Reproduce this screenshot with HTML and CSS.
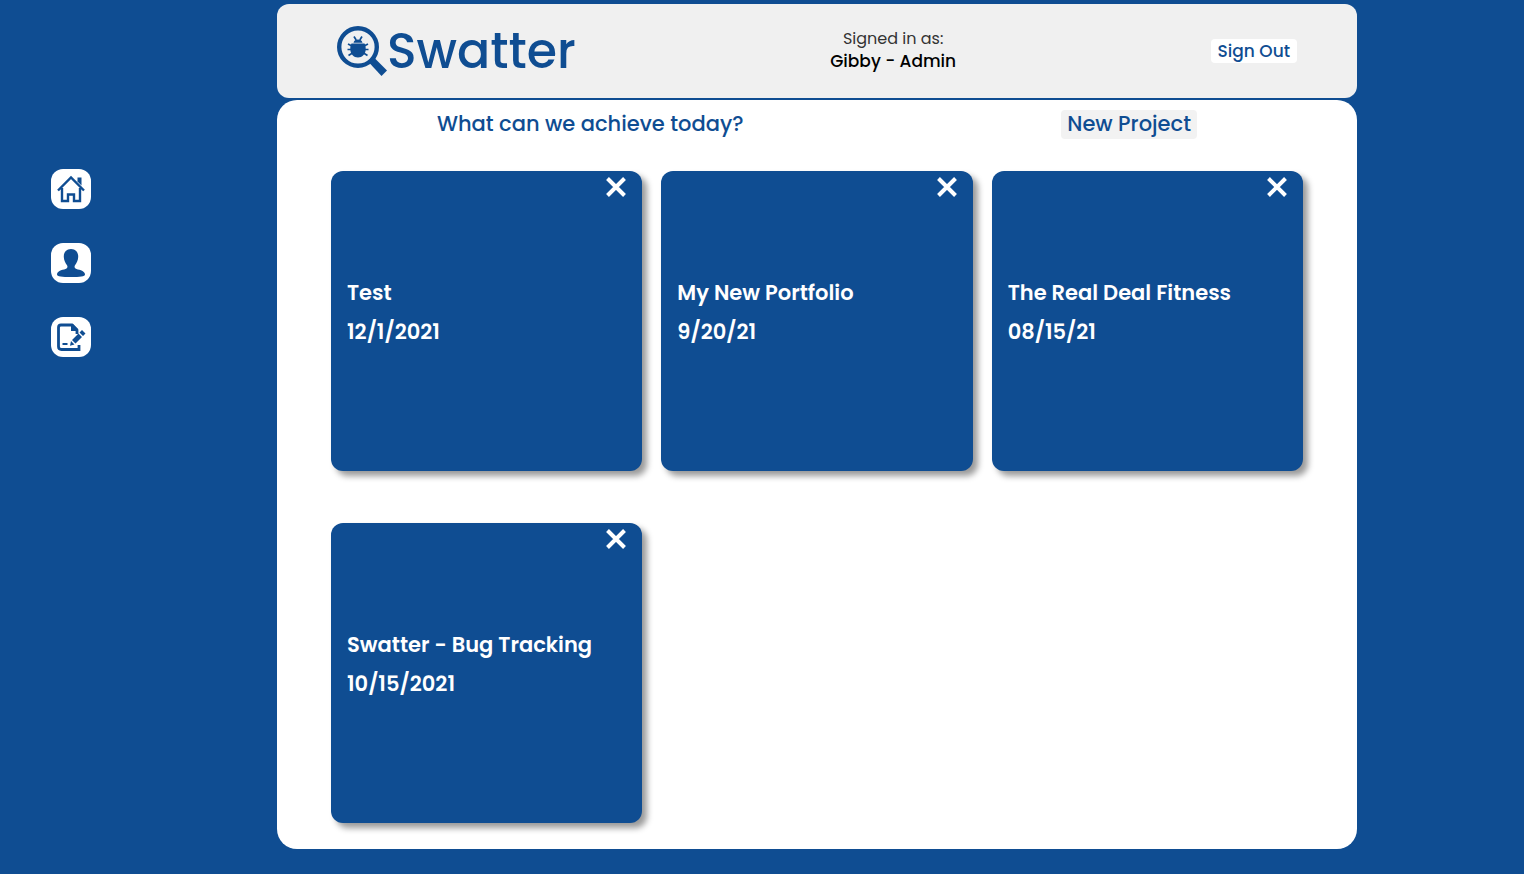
FILE: index.html
```html
<!DOCTYPE html>
<html lang="en">
<head>
<meta charset="utf-8">
<meta name="viewport" content="width=device-width, initial-scale=1">
<title>Swatter</title>
<link rel="stylesheet" href="styles.css">
</head>
<body>
<div class="app">
  <nav class="sidebar" aria-label="Main">
    <a class="nav-link" href="#home" aria-label="Home">
      <svg viewBox="0 0 40 40"><path d="M7 21.500 20 8.500l13 13M11 19v13h6v-6.500h6V32h6V19" fill="none" stroke="currentColor" stroke-width="2.400"/><path d="M26.500 8.500h4v8l-4-4z" fill="currentColor"/></svg>
    </a>
    <a class="nav-link" href="#profile" aria-label="Profile">
      <svg viewBox="0 0 40 40"><path d="M20 6c4.800 0 7.400 3.400 7.200 8-.2 3.600-1.500 6-3.200 8.200-.7 1-.6 2.600.5 3.300 2 1.300 9.500 1.700 9.500 6 0 2-5 2.500-14 2.500S6 33.500 6 31.500c0-4.300 7.500-4.700 9.500-6 1.100-.7 1.200-2.300.5-3.300-1.700-2.200-3-4.600-3.200-8.200-.2-4.600 2.400-8 7.200-8z" fill="currentColor"/></svg>
    </a>
    <a class="nav-link" href="#tickets" aria-label="Tickets">
      <svg viewBox="0 0 40 40"><path d="M26 17v-4l-5-5H10q-2.500 0-2.500 2.500v19q0 3 3 3H28V28" fill="none" stroke="currentColor" stroke-width="2.800"/><path d="M20 7v7h7V12l-5-5z" fill="currentColor"/><path d="M11.500 26h5v2h-5zM31 13l3.500 3.500-2.500 2.500-3.500-3.500zM27.500 16.500l3.500 3.500-6.500 6.500-3.500-3.500zM20 24l3.500 3.500-4.500 1.200z" fill="currentColor"/></svg>
    </a>
  </nav>
  <div class="main">
    <header class="header">
      <a class="brand" href="#home">
        <svg class="brand-icon" viewBox="0 0 50 50" aria-hidden="true">
          <circle cx="21" cy="21" r="18.800" fill="none" stroke="currentColor" stroke-width="4.400"/>
          <path d="M31.500 36 36.500 31 50 44.500 44.500 50z" fill="currentColor"/>
          <path d="M14.500 17.500h13c1 1.500 1.300 3.500 1.200 6-.2 4.500-3.500 8-7.700 8s-7.500-3.500-7.700-8c-.1-2.500.2-4.500 1.200-6zM16.500 16.800c.5-2.300 2.200-3.300 4.500-3.300s4 1 4.500 3.300z" fill="currentColor"/>
          <path d="M19.200 14 17 10.500M22.800 14l2.200-3.500M15 20l-4-2M27 20l4-2M14.500 23.500h-4M27.500 23.500h4M15.500 27l-4 2.500M26.500 27l4 2.500" fill="none" stroke="currentColor" stroke-width="1.700"/>
        </svg>
        <span>Swatter</span>
      </a>
      <div class="account">
        <span class="account-label">Signed in as:</span>
        <span class="account-name">Gibby - Admin</span>
      </div>
      <button class="button sign-out" type="button">Sign Out</button>
    </header>
    <main class="panel">
      <div class="toolbar">
        <h1 class="heading">What can we achieve today?</h1>
        <button class="button new-project" type="button">New Project</button>
      </div>
      <div class="projects">
        <article class="card">
          <button class="close" type="button" aria-label="Delete Test"><svg viewBox="0 0 20 20"><path d="m1.500 1.500 17 17M18.500 1.500l-17 17"/></svg></button>
          <h2 class="card-text">Test</h2><p class="card-text">12/1/2021</p>
        </article>
        <article class="card">
          <button class="close" type="button" aria-label="Delete My New Portfolio"><svg viewBox="0 0 20 20"><path d="m1.500 1.500 17 17M18.500 1.500l-17 17"/></svg></button>
          <h2 class="card-text">My New Portfolio</h2><p class="card-text">9/20/21</p>
        </article>
        <article class="card">
          <button class="close" type="button" aria-label="Delete The Real Deal Fitness"><svg viewBox="0 0 20 20"><path d="m1.500 1.500 17 17M18.500 1.500l-17 17"/></svg></button>
          <h2 class="card-text">The Real Deal Fitness</h2><p class="card-text">08/15/21</p>
        </article>
        <article class="card">
          <button class="close" type="button" aria-label="Delete Swatter - Bug Tracking"><svg viewBox="0 0 20 20"><path d="m1.500 1.500 17 17M18.500 1.500l-17 17"/></svg></button>
          <h2 class="card-text">Swatter - Bug Tracking</h2><p class="card-text">10/15/2021</p>
        </article>
      </div>
    </main>
  </div>
</div>
</body>
</html>
```

FILE: styles.css
```css
:root {
  --blue: #0f4d92;
  --gray: #f0f0f0;
}

* { box-sizing: border-box; }

body {
  margin: 0;
  background: var(--blue);
  color: var(--blue);
  font-family: Poppins, Inter, sans-serif;
  font-weight: 500;
}

svg { display: block; }
h1, h2, p { margin: 0; }

.app {
  display: flex;
  min-height: 100vh;
  padding: 4px 167px 25px 0;
}

.sidebar {
  flex: none;
  display: flex;
  flex-direction: column;
  align-items: center;
  gap: 34px;
  width: 142px;
  margin-right: 135px;
  padding-top: 165px;
}

.nav-link {
  width: 40px;
  height: 40px;
  border-radius: 12px;
  background: #fff;
  color: var(--blue);
}

.main {
  flex: 1;
  min-width: 0;
  display: flex;
  flex-direction: column;
  gap: 2px;
}

.header {
  display: flex;
  align-items: center;
  justify-content: space-between;
  padding: 17px 60px;
  border-radius: 12px;
  background: var(--gray);
}

.brand {
  display: flex;
  align-items: center;
  color: var(--blue);
  font-size: 49px;
  line-height: 60px;
  text-decoration: none;
}

.brand-icon {
  width: 50px;
  height: 50px;
}

.account {
  display: flex;
  flex-direction: column;
  align-items: center;
  padding-bottom: 3px;
  line-height: 22px;
}

.account-label {
  color: #333;
  font-size: 16px;
  font-weight: 400;
}

.account-name {
  color: #000;
  font-size: 17px;
}

.button {
  border: 0;
  border-radius: 4px;
  color: var(--blue);
  font: inherit;
  cursor: pointer;
}

.sign-out {
  padding: 0 7px;
  background: #fff;
  font-size: 17px;
  line-height: 24px;
}

.panel {
  flex: 1;
  padding: 10px 5% 26px;
  border-radius: 20px;
  background: #fff;
}

.toolbar {
  display: flex;
  align-items: flex-start;
  justify-content: space-between;
  margin-bottom: 32px;
  padding: 0 106px;
}

.heading {
  font-size: 21px;
  font-weight: 500;
  line-height: 27px;
}

.new-project {
  padding: 0 6px 2px;
  background: #f2f2f2;
  font-size: 21px;
  line-height: 27px;
}

.projects {
  display: grid;
  grid-template-columns: repeat(3, minmax(0, 1fr));
  gap: 52px 19px;
}

.card {
  display: flex;
  flex-direction: column;
  height: 300px;
  padding: 6px 16px;
  border-radius: 12px;
  background: var(--blue);
  box-shadow: 5px 5px 6px rgba(0, 0, 0, 0.4);
  color: #fff;
}

.close {
  align-self: flex-end;
  width: 20px;
  height: 20px;
  margin-bottom: 76px;
  padding: 0;
  border: 0;
  background: none;
  cursor: pointer;
}

.close path {
  stroke: #fff;
  stroke-width: 4;
}

.card-text {
  font-size: 21px;
  font-weight: 600;
  line-height: 39px;
}
```
